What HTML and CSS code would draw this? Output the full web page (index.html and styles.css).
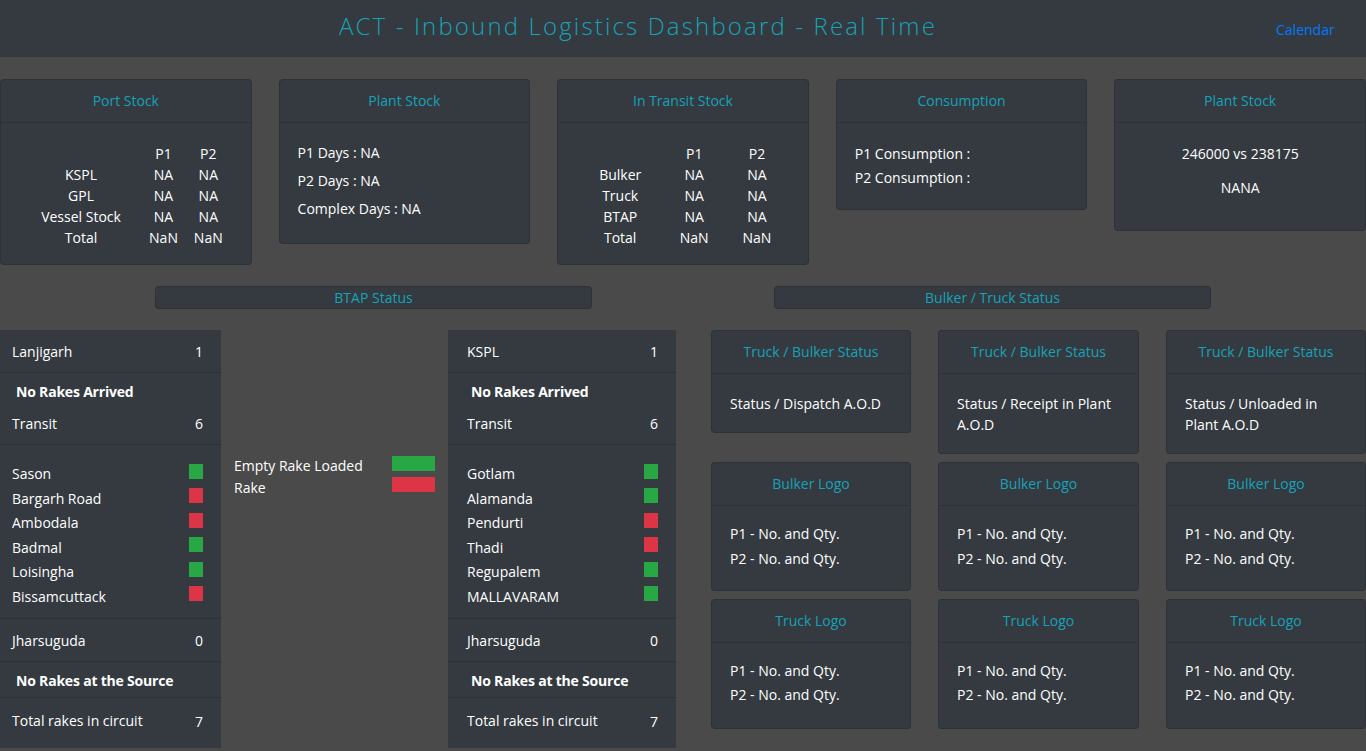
FILE: index.html
```html
<!DOCTYPE html>
<html lang="en">
<head>
<meta charset="utf-8">
<title>ACT - Inbound Logistics Dashboard - Real Time</title>
<link rel="stylesheet" href="styles.css">
</head>
<body>
<header class="topbar">
  <h1 class="title">ACT - Inbound Logistics Dashboard - Real Time</h1>
  <a class="cal" href="#">Calendar</a>
</header>

<main class="page">
  <section class="stock-row">
    <div class="card stock">
      <div class="card-head">Port Stock</div>
      <div class="card-body">
        <div class="tbl tbl-port">
          <span></span><span>P1</span><span>P2</span>
          <span>KSPL</span><span>NA</span><span>NA</span>
          <span>GPL</span><span>NA</span><span>NA</span>
          <span>Vessel Stock</span><span>NA</span><span>NA</span>
          <span>Total</span><span>NaN</span><span>NaN</span>
        </div>
      </div>
    </div>
    <div class="card stock">
      <div class="card-head">Plant Stock</div>
      <div class="card-body body-days">
        <p class="line gap7">P1 Days : NA</p>
        <p class="line gap7">P2 Days : NA</p>
        <p class="line gap7">Complex Days : NA</p>
      </div>
    </div>
    <div class="card stock">
      <div class="card-head">In Transit Stock</div>
      <div class="card-body">
        <div class="tbl tbl-transit">
          <span></span><span>P1</span><span>P2</span>
          <span>Bulker</span><span>NA</span><span>NA</span>
          <span>Truck</span><span>NA</span><span>NA</span>
          <span>BTAP</span><span>NA</span><span>NA</span>
          <span>Total</span><span>NaN</span><span>NaN</span>
        </div>
      </div>
    </div>
    <div class="card stock">
      <div class="card-head">Consumption</div>
      <div class="card-body body-cons">
        <p class="line gap3">P1 Consumption :</p>
        <p class="line gap3">P2 Consumption :</p>
      </div>
    </div>
    <div class="card stock">
      <div class="card-head">Plant Stock</div>
      <div class="card-body body-plant">
        <p class="line first">246000 vs 238175</p>
        <p class="line second">NANA</p>
      </div>
    </div>
  </section>

  <section class="status-row">
    <div class="half"><div class="bar bar-left">BTAP Status</div></div>
    <div class="half"><div class="bar bar-right">Bulker / Truck Status</div></div>
  </section>

  <section class="lower">
    <div class="panel panel-left">
      <div class="row row-top"><span>Lanjigarh</span><span>1</span></div>
      <div class="note note-top">No Rakes Arrived</div>
      <div class="row row-mid"><span>Transit</span><span>6</span></div>
      <div class="stations">
        <div class="st"><span>Sason</span><i class="sq green"></i></div>
        <div class="st"><span>Bargarh Road</span><i class="sq red"></i></div>
        <div class="st"><span>Ambodala</span><i class="sq red"></i></div>
        <div class="st"><span>Badmal</span><i class="sq green"></i></div>
        <div class="st"><span>Loisingha</span><i class="sq green"></i></div>
        <div class="st"><span>Bissamcuttack</span><i class="sq red"></i></div>
      </div>
      <div class="row row-mid"><span>Jharsuguda</span><span>0</span></div>
      <div class="note note-src">No Rakes at the Source</div>
      <div class="row row-total"><span>Total rakes in circuit</span><span class="num-low">7</span></div>
    </div>

    <div class="legend">
      <div class="legend-text">Empty Rake Loaded Rake</div>
      <div class="legend-bars">
        <i class="lbar green"></i>
        <i class="lbar red"></i>
      </div>
    </div>

    <div class="panel panel-right">
      <div class="row row-top"><span>KSPL</span><span>1</span></div>
      <div class="note note-top">No Rakes Arrived</div>
      <div class="row row-mid"><span>Transit</span><span>6</span></div>
      <div class="stations">
        <div class="st"><span>Gotlam</span><i class="sq green"></i></div>
        <div class="st"><span>Alamanda</span><i class="sq green"></i></div>
        <div class="st"><span>Pendurti</span><i class="sq red"></i></div>
        <div class="st"><span>Thadi</span><i class="sq red"></i></div>
        <div class="st"><span>Regupalem</span><i class="sq green"></i></div>
        <div class="st"><span>MALLAVARAM</span><i class="sq green"></i></div>
      </div>
      <div class="row row-mid"><span>Jharsuguda</span><span>0</span></div>
      <div class="note note-src">No Rakes at the Source</div>
      <div class="row row-total"><span>Total rakes in circuit</span><span class="num-low">7</span></div>
    </div>

    <div class="bgrid">
      <div class="card">
        <div class="card-head">Truck / Bulker Status</div>
        <div class="card-body body-status">Status / Dispatch A.O.D</div>
      </div>
      <div class="card">
        <div class="card-head">Truck / Bulker Status</div>
        <div class="card-body body-status">Status / Receipt in Plant A.O.D</div>
      </div>
      <div class="card">
        <div class="card-head">Truck / Bulker Status</div>
        <div class="card-body body-status">Status / Unloaded in Plant A.O.D</div>
      </div>

      <div class="card">
        <div class="card-head">Bulker Logo</div>
        <div class="card-body body-logo">
          <p class="line gap4">P1 - No. and Qty.</p>
          <p class="line gap4">P2 - No. and Qty.</p>
        </div>
      </div>
      <div class="card">
        <div class="card-head">Bulker Logo</div>
        <div class="card-body body-logo">
          <p class="line gap4">P1 - No. and Qty.</p>
          <p class="line gap4">P2 - No. and Qty.</p>
        </div>
      </div>
      <div class="card">
        <div class="card-head">Bulker Logo</div>
        <div class="card-body body-logo">
          <p class="line gap4">P1 - No. and Qty.</p>
          <p class="line gap4">P2 - No. and Qty.</p>
        </div>
      </div>

      <div class="card">
        <div class="card-head">Truck Logo</div>
        <div class="card-body body-logo body-truck">
          <p class="line gap3">P1 - No. and Qty.</p>
          <p class="line gap3">P2 - No. and Qty.</p>
        </div>
      </div>
      <div class="card">
        <div class="card-head">Truck Logo</div>
        <div class="card-body body-logo body-truck">
          <p class="line gap3">P1 - No. and Qty.</p>
          <p class="line gap3">P2 - No. and Qty.</p>
        </div>
      </div>
      <div class="card">
        <div class="card-head">Truck Logo</div>
        <div class="card-body body-logo body-truck">
          <p class="line gap3">P1 - No. and Qty.</p>
          <p class="line gap3">P2 - No. and Qty.</p>
        </div>
      </div>
    </div>
  </section>
</main>
</body>
</html>
```

FILE: styles.css
```css
* { box-sizing: border-box; }

html, body {
  margin: 0;
  padding: 0;
}

body {
  background: #4a4a4a;
  color: #fff;
  font-family: "Open Sans", "Liberation Sans", sans-serif;
  font-size: 14px;
  line-height: 21px;
  height: 751px;
  overflow: hidden;
}

p { margin: 0; }

/* header */
.topbar {
  height: 57px;
  background: #343a40;
  display: flex;
  align-items: center;
}

.title {
  flex: 1;
  margin: 0;
  padding-bottom: 6px;
  text-align: center;
  font-family: "Open Sans", "Liberation Sans", sans-serif;
  font-weight: 300;
  font-size: 24px;
  line-height: 30px;
  letter-spacing: 2.15px;
  color: #17a2b8;
}

.cal {
  width: 90px;
  color: #007bff;
  font-size: 14px;
  text-decoration: none;
  padding-top: 2px;
}

/* page */
.page {
  padding-top: 22px;
}

.card {
  background: #343a40;
  border: 1px solid rgba(0, 0, 0, 0.125);
  border-radius: 4px;
}

.card-head {
  padding: 10px 18px;
  line-height: 22px;
  text-align: center;
  color: #17a2b8;
  border-bottom: 1px solid rgba(0, 0, 0, 0.125);
}

.card-body {
  padding: 20px 20px 16px;
}

/* top stock row */
.stock-row {
  display: flex;
  justify-content: space-between;
  align-items: flex-start;
}

.stock {
  width: 251.6px;
}

.tbl {
  display: grid;
  text-align: center;
}

.tbl-port { grid-template-columns: 120px 45px 1fr; }
.tbl-transit { grid-template-columns: 84px 64px 1fr; }

.line.gap7 { margin-bottom: 7px; }
.line.gap3 { margin-bottom: 3px; }
.line.gap4 { margin-bottom: 4px; }

.body-days { padding: 19px 18px 17px; }
.body-cons { padding: 20px 18px 18px; }
.body-plant { padding: 20px 18px 16px; text-align: center; }
.body-plant .first { margin-bottom: 12.5px; }
.body-plant .second { margin-bottom: 16px; }

/* status bars */
.status-row {
  display: flex;
  margin-top: 21px;
}

.half {
  width: 683px;
}

.bar {
  width: 437px;
  height: 23px;
  background: #343a40;
  border: 1px solid rgba(0, 0, 0, 0.125);
  border-radius: 4px;
  text-align: center;
  color: #17a2b8;
  line-height: 21px;
}

.bar-left { margin-left: 155px; }
.bar-right { margin-left: 91px; }

/* lower section */
.lower {
  display: flex;
  align-items: flex-start;
  margin-top: 21px;
}

.panel {
  height: 418px;
  background: #343a40;
  display: flex;
  flex-direction: column;
}

.panel-left { width: 221px; }
.panel-right { width: 228px; }

.row {
  display: flex;
  justify-content: space-between;
  padding-right: 18px;
}

.panel-left .row, .panel-left .stations { padding-left: 12px; }
.panel-right .row, .panel-right .stations { padding-left: 19px; }

.row-top {
  padding-top: 11px;
  padding-bottom: 10px;
  border-bottom: 1px solid rgba(0, 0, 0, 0.125);
}

.row-mid {
  padding-top: 11px;
  padding-bottom: 10px;
  border-bottom: 1px solid rgba(0, 0, 0, 0.125);
}

.row-total {
  flex: 1;
  padding-top: 12px;
}

.num-low { padding-top: 1px; }

.note {
  font-weight: 700;
  letter-spacing: -0.2px;
}

.panel-left .note { padding-left: 16px; }
.panel-right .note { padding-left: 23px; }

.note-top {
  padding-top: 8px;
}

.note-src {
  padding-top: 8px;
  padding-bottom: 6px;
  border-bottom: 1px solid rgba(0, 0, 0, 0.125);
}

.stations {
  padding-top: 17px;
  padding-bottom: 8px;
  padding-right: 18px;
  border-bottom: 1px solid rgba(0, 0, 0, 0.125);
}

.st {
  display: flex;
  justify-content: space-between;
  align-items: flex-start;
  height: 24.6px;
  line-height: 24.6px;
}

.sq {
  display: block;
  width: 14px;
  height: 15px;
  margin-top: 1.5px;
}

.green { background: #28a745; }
.red { background: #dc3545; }

/* legend */
.legend {
  width: 227px;
  display: flex;
  padding: 125px 0 0 13px;
}

.legend-text {
  width: 150px;
  line-height: 22px;
}

.legend-bars {
  margin-left: 8px;
  padding-top: 1px;
  display: flex;
  flex-direction: column;
  gap: 6px;
}

.lbar {
  display: block;
  width: 43px;
  height: 15px;
}

/* bulker / truck grid */
.bgrid {
  margin-left: 35px;
  display: grid;
  grid-template-columns: 200px 201px 200px;
  column-gap: 27px;
  row-gap: 8px;
  align-items: start;
}

.body-status {
  padding: 19px 18px 18px;
}

.body-logo {
  padding: 17px 18px 17px;
}

.body-logo.body-truck {
  padding-bottom: 20px;
}
```
